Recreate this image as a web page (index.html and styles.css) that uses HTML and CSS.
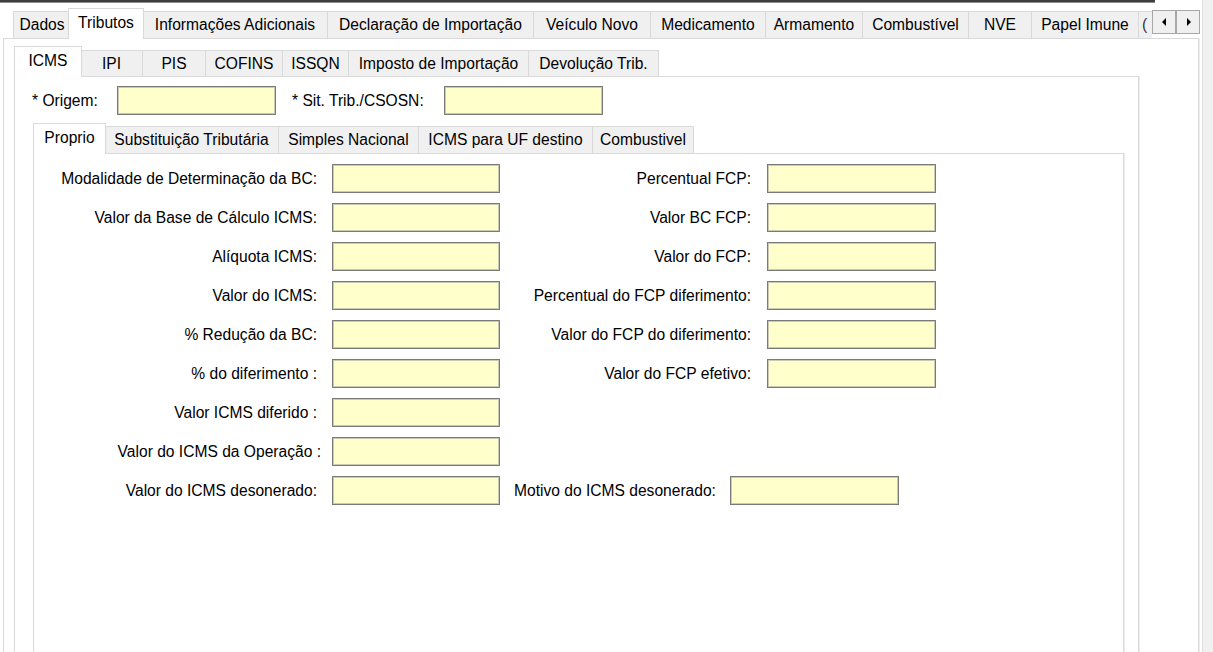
FILE: index.html
```html
<!DOCTYPE html>
<html lang="pt-BR">
<head>
    <meta charset="UTF-8">
    <meta name="viewport" content="width=device-width, initial-scale=1.0">
    <title>Tributos - ICMS</title>
    <link rel="stylesheet" href="styles.css">
</head>
<body>

<div class="page">
    <div class="main">
        <div class="topline"></div>

        <div class="strip strip-outer">
            <div class="tabwrap">
                <span class="tab t-dados">Dados</span>
                <span class="tab t-tributos active">Tributos</span>
                <span class="tab t-info">Informações Adicionais</span>
                <span class="tab t-decl">Declaração de Importação</span>
                <span class="tab t-veiculo">Veículo Novo</span>
                <span class="tab t-medic">Medicamento</span>
                <span class="tab t-arma">Armamento</span>
                <span class="tab t-comb">Combustível</span>
                <span class="tab t-nve">NVE</span>
                <span class="tab t-papel">Papel Imune</span>
                <span class="tab t-more">(</span>
            </div>
            <div class="scroller">
                <span class="arrow">
                    <svg width="5" height="8" viewBox="0 0 5 8"><path d="M4 0 L0 4 L4 8 Z" fill="#000"/></svg>
                </span>
                <span class="arrow">
                    <svg width="5" height="8" viewBox="0 0 5 8"><path d="M1 0 L5 4 L1 8 Z" fill="#000"/></svg>
                </span>
            </div>
        </div>

        <div class="panel panel-outer">
            <div class="strip strip-icms">
                <span class="tab t-icms active">ICMS</span>
                <span class="tab t-ipi">IPI</span>
                <span class="tab t-pis">PIS</span>
                <span class="tab t-cofins">COFINS</span>
                <span class="tab t-issqn">ISSQN</span>
                <span class="tab t-imp">Imposto de Importação</span>
                <span class="tab t-dev last">Devolução Trib.</span>
            </div>

            <div class="panel panel-icms">
                <div class="origin-row">
                    <label class="lbl-origem">* Origem:</label>
                    <input class="inp inp-top" type="text">
                    <label class="lbl-sit">* Sit. Trib./CSOSN:</label>
                    <input class="inp inp-top" type="text">
                </div>

                <div class="strip strip-proprio">
                    <span class="tab t-proprio active">Proprio</span>
                    <span class="tab t-subst">Substituição Tributária</span>
                    <span class="tab t-simples">Simples Nacional</span>
                    <span class="tab t-uf">ICMS para UF destino</span>
                    <span class="tab t-combus last">Combustivel</span>
                </div>

                <div class="panel panel-proprio">
                    <div class="form-row">
                        <label class="lbl-l">Modalidade de Determinação da BC:</label>
                        <input class="inp inp-l" type="text">
                        <label class="lbl-r">Percentual FCP:</label>
                        <input class="inp inp-r" type="text">
                    </div>
                    <div class="form-row">
                        <label class="lbl-l">Valor da Base de Cálculo ICMS:</label>
                        <input class="inp inp-l" type="text">
                        <label class="lbl-r">Valor BC FCP:</label>
                        <input class="inp inp-r" type="text">
                    </div>
                    <div class="form-row">
                        <label class="lbl-l">Alíquota ICMS:</label>
                        <input class="inp inp-l" type="text">
                        <label class="lbl-r">Valor do FCP:</label>
                        <input class="inp inp-r" type="text">
                    </div>
                    <div class="form-row">
                        <label class="lbl-l">Valor do ICMS:</label>
                        <input class="inp inp-l" type="text">
                        <label class="lbl-r">Percentual do FCP diferimento:</label>
                        <input class="inp inp-r" type="text">
                    </div>
                    <div class="form-row">
                        <label class="lbl-l">% Redução da BC:</label>
                        <input class="inp inp-l" type="text">
                        <label class="lbl-r">Valor do FCP do diferimento:</label>
                        <input class="inp inp-r" type="text">
                    </div>
                    <div class="form-row">
                        <label class="lbl-l">% do diferimento :</label>
                        <input class="inp inp-l" type="text">
                        <label class="lbl-r">Valor do FCP efetivo:</label>
                        <input class="inp inp-r" type="text">
                    </div>
                    <div class="form-row">
                        <label class="lbl-l">Valor ICMS diferido :</label>
                        <input class="inp inp-l" type="text">
                    </div>
                    <div class="form-row">
                        <label class="lbl-l shift">Valor do ICMS da Operação :</label>
                        <input class="inp inp-l" type="text">
                    </div>
                    <div class="form-row">
                        <label class="lbl-l">Valor do ICMS desonerado:</label>
                        <input class="inp inp-l" type="text">
                        <label class="lbl-m">Motivo do ICMS desonerado:</label>
                        <input class="inp inp-r" type="text">
                    </div>
                </div>
            </div>
        </div>
    </div>
    <div class="side"></div>
</div>

</body>
</html>
```

FILE: styles.css
```css
* {
    box-sizing: border-box;
}

body {
    margin: 0;
    background-color: #fff;
    font-family: "Liberation Sans", Arial, sans-serif;
    font-size: 15.6px;
    color: #000;
    overflow: hidden;
}

.page {
    display: flex;
    width: 1213px;
    height: 652px;
}

.main {
    width: 1202px;
    flex: none;
    display: flex;
    flex-direction: column;
}

.side {
    flex: 1;
    background-color: #f0f0f0;
    border-left: 1px solid #e0e0e0;
}

.topline {
    width: 1155px;
    height: 3px;
    background-color: #3e3e3e;
    border-bottom: 1px solid #8c8c8c;
    flex: none;
}

/* tab strips */

.strip {
    display: flex;
    align-items: flex-end;
    position: relative;
    z-index: 1;
    flex: none;
}

.strip-outer {
    margin-top: 5px;
    height: 31px;
    padding-left: 13px;
}

.tabwrap {
    display: flex;
    align-items: flex-end;
    width: 1139px;
    height: 100%;
    overflow: hidden;
}

.tab {
    flex: none;
    display: flex;
    align-items: center;
    justify-content: center;
    height: 27px;
    margin-bottom: 1px;
    background-color: #f0f0f0;
    border-top: 1px solid #d9d9d9;
    border-left: 1px solid #d9d9d9;
    white-space: nowrap;
}

.tab.last {
    border-right: 1px solid #d9d9d9;
}

.tab.active {
    position: relative;
    z-index: 2;
    height: 31px;
    margin: 0 -2px;
    background-color: #fff;
    border-right: 1px solid #d9d9d9;
    padding-bottom: 3px;
}

.t-dados { width: 57px; }
.t-tributos { width: 76px; }
.t-info { width: 185px; }
.t-decl { width: 206px; }
.t-veiculo { width: 117px; }
.t-medic { width: 115px; }
.t-arma { width: 97px; }
.t-comb { width: 106px; }
.t-nve { width: 63px; }
.t-papel { width: 107px; }
.t-more { width: 14px; justify-content: flex-start; padding-left: 3px; color: #333; }

.scroller {
    display: flex;
    align-self: flex-start;
    margin-top: 2px;
}

.arrow {
    width: 24px;
    height: 24px;
    display: flex;
    align-items: center;
    justify-content: center;
    background-color: #f0f0f0;
    border: 1px solid #a8a8a8;
}

/* panels */

.panel {
    flex: 1;
    display: flex;
    flex-direction: column;
    margin-top: -1px;
    background-color: #fff;
    border: 1px solid #d9d9d9;
    border-bottom: none;
    box-shadow: 1px 0 0 #ededed;
}

.panel-outer {
    width: 1196px;
    margin-left: 3px;
}

.strip-icms {
    height: 31px;
    margin-top: 7px;
    margin-left: 10px;
    padding-left: 2px;
}

.strip-icms .tab {
    height: 26px;
}

.strip-icms .tab.active {
    height: 31px;
}

.t-icms { width: 68px; }
.t-ipi { width: 62px; }
.t-pis { width: 63px; }
.t-cofins { width: 77px; }
.t-issqn { width: 66px; }
.t-imp { width: 180px; }
.t-dev { width: 131px; }

.panel-icms {
    width: 1125px;
    margin-left: 10px;
}

.origin-row {
    display: flex;
    align-items: center;
    height: 29px;
    margin-top: 9px;
    flex: none;
}

.lbl-origem {
    width: 102px;
    padding-left: 17px;
}

.lbl-sit {
    width: 168px;
    padding-left: 16px;
}

.inp {
    height: 29px;
    padding: 0 3px;
    margin: 0;
    background-color: #ffffcc;
    border: 1px solid #7a7a7a;
    box-shadow: inset 0 0 0 1px #c9c9b4;
    font: inherit;
    outline: none;
    flex: none;
}

.inp-top {
    width: 159px;
}

.strip-proprio {
    height: 32px;
    margin-top: 7px;
    margin-left: 18px;
    padding-left: 2px;
}

.t-proprio { width: 73px; }
.t-subst { width: 174px; }
.t-simples { width: 140px; }
.t-uf { width: 174px; }
.t-combus { width: 102px; }

.panel-proprio {
    width: 1091px;
    margin-left: 18px;
    padding-top: 10px;
}

.form-row {
    display: flex;
    align-items: center;
    height: 29px;
    margin-bottom: 10px;
    flex: none;
}

.lbl-l {
    width: 283px;
    margin-right: 15px;
    text-align: right;
    white-space: nowrap;
}

.lbl-l.shift {
    margin-right: 11px;
    width: 287px;
}

.inp-l {
    width: 168px;
}

.lbl-r {
    width: 251px;
    margin-right: 16px;
    text-align: right;
    white-space: nowrap;
}

.inp-r {
    width: 169px;
}

.lbl-m {
    width: 216px;
    margin-left: 14px;
    white-space: nowrap;
}
```
